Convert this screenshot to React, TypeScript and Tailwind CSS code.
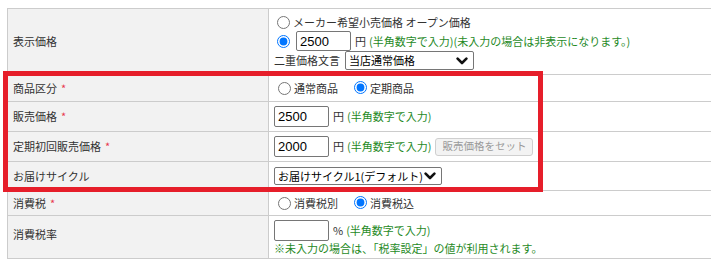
import React from "react";

const font = { fontFamily: '"Noto Sans CJK JP", "Noto Sans", sans-serif' };

function Radio({ checked }: { checked?: boolean }) {
  return (
    <input
      type="radio"
      readOnly
      checked={!!checked}
      className="m-0 w-[13px] h-[13px] shrink-0 accent-[#0075ff]"
    />
  );
}

function TextBox({ value, w = "w-[55px]", h = "h-[21px]" }: { value: string; w?: string; h?: string }) {
  return (
    <div
      className={`${w} ${h} shrink-0 border border-[#767676] rounded-[2px] bg-white pl-[3px] flex items-center text-[13px] text-black`}
      style={{ fontFamily: '"Liberation Sans", Arial, sans-serif' }}
    >
      {value}
    </div>
  );
}

function Chevron() {
  return (
    <svg width="12" height="8" viewBox="0 0 12 8" className="shrink-0">
      <path d="M1.6 1.6 L6 6 L10.4 1.6" fill="none" stroke="#111" strokeWidth="2.6" strokeLinecap="round" strokeLinejoin="round" />
    </svg>
  );
}

function SelectBox({ text, w, h }: { text: string; w: string; h: string }) {
  return (
    <div
      className={`${w} ${h} shrink-0 border border-[#767676] rounded-[2px] bg-white pl-[3px] pr-[5px] flex items-center justify-between text-[11px] text-black`}
    >
      <span className="whitespace-nowrap">{text}</span>
      <Chevron />
    </div>
  );
}

const Req = () => <span className="text-[#e8384f] ml-[4px]">*</span>;

function Row({
  h,
  label,
  children,
  labelPad = "",
}: {
  h: string;
  label: React.ReactNode;
  children: React.ReactNode;
  labelPad?: string;
}) {
  return (
    <div className={`flex ${h} border-b border-[#cccccc]`}>
      <div
        className={`w-[261px] shrink-0 bg-[#f2f2f2] border-r border-[#cccccc] pl-[5px] flex items-center text-[11px] text-[#333] ${labelPad}`}
      >
        {label}
      </div>
      <div className="flex-1 bg-white pl-[5px] flex flex-col justify-center text-[11px] text-[#333]">{children}</div>
    </div>
  );
}

const G = ({ children }: { children: React.ReactNode }) => <span className="text-[#1f8a1f]">{children}</span>;

export default function App() {
  return (
    <div className="relative w-[711px] h-[269px] bg-white overflow-hidden leading-none" style={font}>
      <div className="ml-[7px] mt-[8px] border-t border-l border-[#cccccc]">
        <Row h="h-[66px]" label="表示価格">
          <div className="flex flex-col">
            <div className="h-[18px] flex items-center gap-[3px] pl-[3px]">
              <Radio />
              <span>メーカー希望小売価格 オープン価格</span>
            </div>
            <div className="h-[20px] flex items-center pl-[3px]">
              <Radio checked />
              <div className="ml-[6px]">
                <TextBox value="2500" h="h-[20px]" />
              </div>
              <span className="ml-[4px]">円</span>
              <span className="ml-[3px]">
                <G>(半角数字で入力)(未入力の場合は非表示になります。)</G>
              </span>
            </div>
            <div className="h-[19px] flex items-center">
              <span>二重価格文言</span>
              <div className="ml-[5px]">
                <SelectBox text="当店通常価格" w="w-[129px]" h="h-[19px]" />
              </div>
            </div>
          </div>
        </Row>
        <Row
          h="h-[27px]"
          label={
            <span>
              商品区分
              <Req />
            </span>
          }
        >
          <div className="flex items-center pl-[4px]">
            <Radio />
            <span className="ml-[3px]">通常商品</span>
            <span className="ml-[16px]">
              <Radio checked />
            </span>
            <span className="ml-[3px]">定期商品</span>
          </div>
        </Row>
        <Row
          h="h-[30px]"
          label={
            <span>
              販売価格
              <Req />
            </span>
          }
        >
          <div className="flex items-center">
            <TextBox value="2500" />
            <span className="ml-[4px]">円</span>
            <span className="ml-[3px]">
              <G>(半角数字で入力)</G>
            </span>
          </div>
        </Row>
        <Row
          h="h-[30px]"
          label={
            <span>
              定期初回販売価格
              <Req />
            </span>
          }
        >
          <div className="flex items-center">
            <TextBox value="2000" />
            <span className="ml-[4px]">円</span>
            <span className="ml-[3px]">
              <G>(半角数字で入力)</G>
            </span>
            <div className="ml-[4px] w-[98px] h-[18px] border border-[#cfcfcf] rounded-[3px] bg-[#f3f3f3] flex items-center justify-center text-[10.5px] text-[#9a9a9a]">
              販売価格をセット
            </div>
          </div>
        </Row>
        <Row h="h-[29px]" label="お届けサイクル">
          <div className="flex items-center">
            <SelectBox text="お届けサイクル1(デフォルト)" w="w-[168px]" h="h-[18px]" />
          </div>
        </Row>
        <Row
          h="h-[25px]"
          label={
            <span>
              消費税
              <Req />
            </span>
          }
        >
          <div className="flex items-center pl-[4px]">
            <Radio />
            <span className="ml-[3px]">消費税別</span>
            <span className="ml-[16px]">
              <Radio checked />
            </span>
            <span className="ml-[3px]">消費税込</span>
          </div>
        </Row>
        <Row h="h-[43px]" label="消費税率" labelPad="pb-[6px]">
          <div className="flex flex-col">
            <div className="flex items-center">
              <TextBox value="" />
              <span className="ml-[4px]">%</span>
              <span className="ml-[3px]">
                <G>(半角数字で入力)</G>
              </span>
            </div>
            <div className="mt-[2px]">
              <G>※未入力の場合は、「税率設定」の値が利用されます。</G>
            </div>
          </div>
        </Row>
      </div>
      <div className="absolute left-[3px] top-[71px] w-[540px] h-[121px] border-[5px] border-[#e61e2a] pointer-events-none" />
    </div>
  );
}
